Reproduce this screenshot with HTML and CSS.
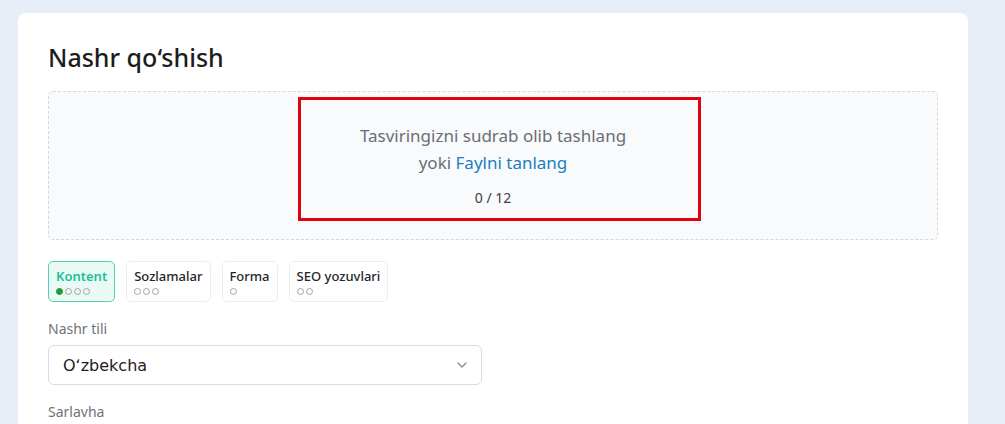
FILE: index.html
```html
<!DOCTYPE html>
<html lang="uz">
<head>
<meta charset="UTF-8">
<title>Nashr qo‘shish</title>
<link rel="stylesheet" href="styles.css">
</head>
<body>
    <div class="card">
        <h1>Nashr qo‘shish</h1>

        <div class="dropzone">
            <div class="drop-box">
                <p class="drop-text">Tasviringizni sudrab olib tashlang</p>
                <p class="drop-text">yoki <a href="#" class="file-link">Faylni tanlang</a></p>
                <p class="drop-count">0 / 12</p>
            </div>
        </div>

        <div class="tabs">
            <div class="tab active">
                <span class="tab-name">Kontent</span>
                <span class="dots"><i class="dot filled"></i><i class="dot"></i><i class="dot"></i><i class="dot"></i></span>
            </div>
            <div class="tab">
                <span class="tab-name">Sozlamalar</span>
                <span class="dots"><i class="dot"></i><i class="dot"></i><i class="dot"></i></span>
            </div>
            <div class="tab">
                <span class="tab-name">Forma</span>
                <span class="dots"><i class="dot"></i></span>
            </div>
            <div class="tab">
                <span class="tab-name">SEO yozuvlari</span>
                <span class="dots"><i class="dot"></i><i class="dot"></i></span>
            </div>
        </div>

        <label class="field-label">Nashr tili</label>
        <div class="select">
            <span class="select-value">Oʻzbekcha</span>
            <svg class="chevron" width="10" height="6" viewBox="0 0 10 6"><path d="M1 1l4 4 4-4" fill="none" stroke="#8a8f98" stroke-width="1.4" stroke-linecap="round" stroke-linejoin="round"/></svg>
        </div>

        <label class="field-label">Sarlavha</label>
    </div>
</body>
</html>
```

FILE: styles.css
```css
body {
    margin: 0;
    padding: 13px 37px 0 18px;
    background-color: #e8eef7;
    font-family: "Noto Sans", "Open Sans", sans-serif;
    color: #1f2024;
    height: 424px;
    box-sizing: border-box;
    overflow: hidden;
}
.card {
    background-color: #ffffff;
    border-radius: 8px 8px 0 0;
    padding: 28px 30px 20px;
    min-height: 363px;
}
h1 {
    margin: 0 0 18px;
    font-size: 25px;
    line-height: 32px;
    font-weight: 500;
    color: #1c1d21;
}

/* rasm yuklash maydoni */
.dropzone {
    height: 149px;
    box-sizing: border-box;
    border: 1px dashed #d3d8df;
    border-radius: 5px;
    background-color: #f8fafc;
    display: flex;
    flex-direction: column;
    align-items: center;
    padding: 5px 0 0 13px;
}
.drop-box {
    width: 403px;
    height: 124px;
    box-sizing: border-box;
    border: 3px solid #e3000f;
    text-align: center;
    padding: 22px 13px 0 0;
}
.drop-text {
    margin: 0;
    font-size: 17px;
    line-height: 27px;
    color: #6b6e76;
}
.file-link {
    color: #1b7ec2;
    text-decoration: none;
}
.drop-count {
    margin: 12px 0 0;
    font-size: 14px;
    line-height: 20px;
    color: #404146;
}

/* bo'limlar */
.tabs {
    display: flex;
    gap: 11px;
    margin-top: 21px;
}
.tab {
    display: flex;
    flex-direction: column;
    height: 41px;
    box-sizing: border-box;
    padding: 5px 7px 0;
    border: 1px solid #eceef1;
    border-radius: 5px;
}
.tab-name {
    font-size: 13px;
    line-height: 18px;
    font-weight: 500;
    color: #25262b;
}
.tab.active {
    background-color: #e9faf5;
    border-color: #52d1b3;
}
.tab.active .tab-name {
    color: #1dbf98;
    font-weight: 600;
}
.dots {
    display: flex;
    gap: 2px;
    margin-top: 3px;
}
.dot {
    width: 5px;
    height: 5px;
    border: 1px solid #9ea2a8;
    border-radius: 50%;
}
.dot.filled {
    background-color: #1f9a3c;
    border-color: #1f9a3c;
}

/* maydonlar */
.field-label {
    display: block;
    margin-top: 17px;
    font-size: 14px;
    line-height: 20px;
    color: #6f727a;
}
.select {
    display: flex;
    align-items: center;
    justify-content: space-between;
    width: 434px;
    height: 40px;
    box-sizing: border-box;
    margin-top: 6px;
    padding: 0 14px 0 14px;
    border: 1px solid #dadcdf;
    border-radius: 6px;
}
.select-value {
    font-family: "DejaVu Sans", sans-serif;
    font-size: 16px;
    color: #1f2024;
}
```
